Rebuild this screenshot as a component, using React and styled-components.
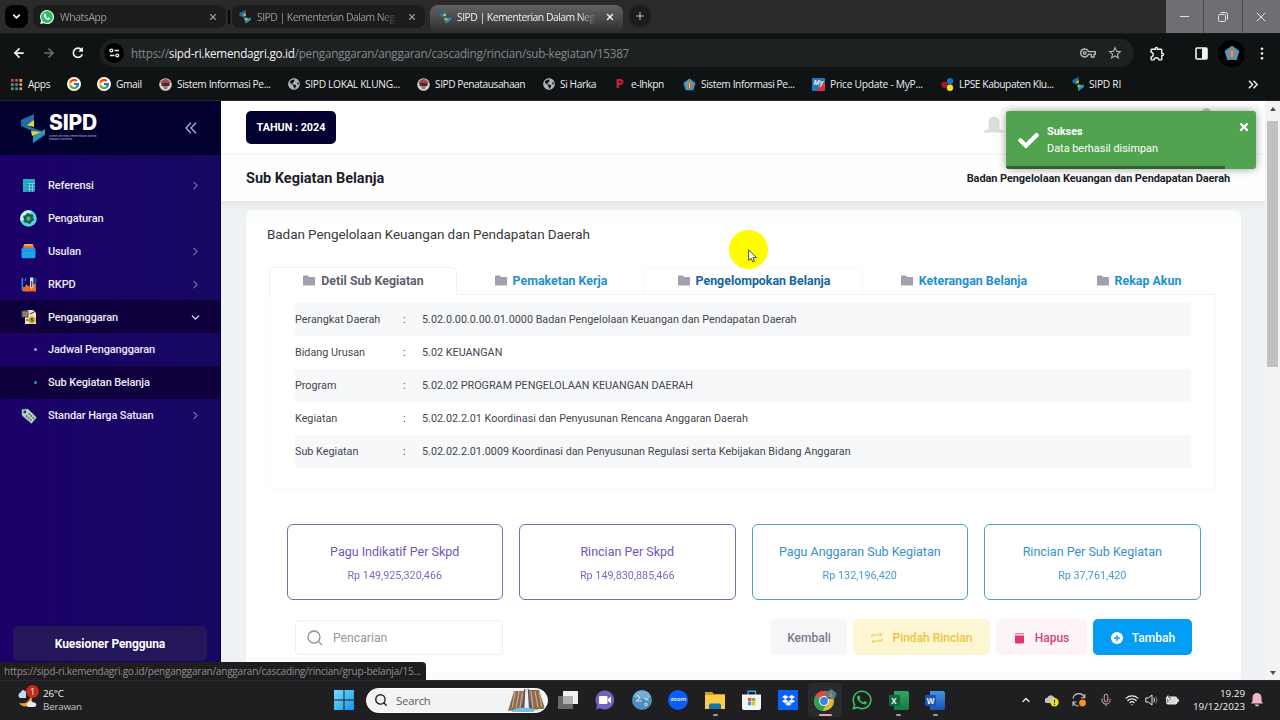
import styled, { createGlobalStyle, css } from 'styled-components';
import { FcGoogle } from 'react-icons/fc';
import { FaCheck, FaTimes, FaWhatsapp, FaDropbox, FaGlobeAmericas } from 'react-icons/fa';
import { MdOutlineVpnKey, MdStarBorder, MdOutlineExtension } from 'react-icons/md';
import { ArrowLeft, ArrowRight, ChevronDown, ChevronRight, ChevronUp, Plus, X, Search, Mic, Wifi } from 'lucide-react';

const GlobalStyle = createGlobalStyle`
  * {
    box-sizing: border-box;
  }

  body {
    margin: 0;
    overflow: hidden;
    background: #0f1214;
    font-family: 'Roboto', sans-serif;
  }

  svg {
    display: block;
    flex-shrink: 0;
  }
`;

const systemFont = css`
  font-family: 'Open Sans', 'Noto Sans', sans-serif;
`;

const Screen = styled.div`
  width: 1280px;
  height: 720px;
  display: flex;
  flex-direction: column;
  overflow: hidden;
`;

// ---------- Browser ----------
const TabStrip = styled.div`
  ${systemFont}
  height: 34px;
  flex-shrink: 0;
  display: flex;
  align-items: flex-start;
  padding: 5px 0 0 5px;
  background: #2a2a2a;
  border-bottom: 1px solid #17191a;
`;

const TabSearch = styled.div`
  width: 23px;
  height: 23px;
  margin-right: 5px;
  display: flex;
  align-items: center;
  justify-content: center;
  color: #fff;
  background: #000;
  border-radius: 8px;
`;

const BrowserTab = styled.div`
  width: 193px;
  height: ${({ $active }) => ($active ? 28 : 23)}px;
  padding: ${({ $active }) => ($active ? '0 8px 5px 9px' : '0 8px 0 7px')};
  display: flex;
  align-items: center;
  border-radius: 8px;
  font-size: 10.4px;
  color: ${({ $active }) => ($active ? '#f2f2f2' : '#9a9a9a')};
  background: ${({ $active }) =>
    $active ? 'linear-gradient(#626262, #4c4c4c 45%, #2a2a2a)' : '#1d1c1d'};

  span {
    flex: 1;
    margin: 0 7px 0 6px;
    white-space: nowrap;
    letter-spacing: ${({ $ls }) => $ls || -0.52}px;
    mask-image: linear-gradient(90deg, #000 86%, transparent 99%);
  }
`;

const TabDivider = styled.div`
  width: 2px;
  height: 14px;
  margin: 5px 2px 0;
  background: #050505;
`;

const NewTab = styled.div`
  width: 22px;
  height: 22px;
  margin-left: 6px;
  display: flex;
  align-items: center;
  justify-content: center;
  border-radius: 50%;
  color: #bdbdbd;
  background: #1d1c1d;
`;

const WindowControls = styled.div`
  display: flex;
  gap: 1px;
  margin: -5px 0 0 auto;
  background: #4b4a4e;
`;

const WindowControl = styled.div`
  width: 37.4px;
  height: 33px;
  display: flex;
  align-items: center;
  justify-content: center;
  color: #e4e4e6;
  background: #706e75;
`;

const Toolbar = styled.div`
  ${systemFont}
  height: 36px;
  flex-shrink: 0;
  display: flex;
  align-items: center;
  padding: 2px 0 0 10px;
  background: #101314;
  color: #f1f1f1;
`;

const NavButton = styled.div`
  width: 30px;
  padding-left: 2px;
  color: ${({ $muted }) => ($muted ? '#707273' : '#f4f4f4')};
`;

const AddressBar = styled.div`
  width: 1034px;
  height: 28px;
  padding: 0 11px 0 4px;
  display: flex;
  align-items: center;
  border-radius: 14px;
  background: #1e2122;
  color: #b9babb;
`;

const SiteInfo = styled.div`
  width: 20px;
  height: 20px;
  display: flex;
  align-items: center;
  justify-content: center;
  border-radius: 50%;
  background: #000;
`;

const Url = styled.div`
  flex: 1;
  margin-left: 7px;
  font-size: 11.7px;
  letter-spacing: -0.255px;
  color: #85888a;

  b {
    font-weight: 400;
    color: #f3f3f3;
  }
`;

const AddressIcons = styled.div`
  display: flex;
  align-items: center;
  gap: 11px;
`;

const Profile = styled.div`
  width: 27px;
  height: 27px;
  display: flex;
  align-items: center;
  justify-content: center;
  border-radius: 50%;
  background: #000;
`;

const Gap = styled.div`
  width: ${({ $w }) => $w}px;
`;

const BookmarkBar = styled.div`
  ${systemFont}
  height: 30px;
  flex-shrink: 0;
  padding: 0 0 2px 10px;
  display: grid;
  grid-template-columns: 57px 30px 62px 129px 129px 126px 72px 68px 129px 129px 131px 176px 20px;
  align-items: center;
  background: #101314;
  color: #ececec;
  font-size: 10.2px;
`;

const Bookmark = styled.div`
  display: flex;
  align-items: center;
  gap: 5px;
  white-space: nowrap;
  letter-spacing: ${({ $ls }) => $ls || -0.4}px;
`;

// ---------- Page ----------
const Page = styled.div`
  position: relative;
  height: 580px;
  flex-shrink: 0;
  display: flex;
  border-top: 1px solid #23242c;
  background: #eff2f5;
`;

const Sidebar = styled.aside`
  width: 221px;
  flex-shrink: 0;
  display: flex;
  flex-direction: column;
  border-right: 1px solid #06002c;
  background: linear-gradient(90deg, #1b0069, #160862);
`;

const Brand = styled.div`
  height: 54px;
  padding: 0 23px 0 20px;
  display: flex;
  align-items: center;
  background: #02002f;
  color: #fff;
`;

const BrandText = styled.div`
  flex: 1;
  margin: -3px 0 0 4px;
  font-family: 'Inter', sans-serif;

  strong {
    display: block;
    margin-bottom: 2px;
    font-size: 21px;
    line-height: 20px;
    font-weight: 800;
    letter-spacing: -0.15px;
  }

  small {
    display: block;
    width: 100px;
    font-size: 2.6px;
    line-height: 3px;
    color: #b9b9d0;
  }
`;

const Menu = styled.nav`
  padding-top: 13.5px;
  flex: 1;
`;

const MenuItem = styled.div`
  height: 32.9px;
  padding: 1px 18px 0 20px;
  display: flex;
  align-items: center;
  font-size: 11px;
  font-weight: 500;
  color: #eceaf8;
  background: ${({ $active }) => ($active ? '#0f003d' : 'transparent')};

  span {
    flex: 1;
    margin-left: 11px;
    letter-spacing: -0.12px;
  }
`;

const MenuIcon = styled.div`
  width: 17px;
  height: 17px;
  display: flex;
  align-items: center;
  justify-content: center;
`;

const Bullet = styled.i`
  width: 3px;
  height: 3px;
  margin-left: 14px;
  border-radius: 50%;
  background: ${({ $color }) => $color};
`;

const SurveyButton = styled.div`
  height: 35px;
  margin: 0 13px 19px;
  display: flex;
  align-items: center;
  justify-content: center;
  border-radius: 5px;
  background: #25165a;
  color: #fff;
  font-size: 12px;
  letter-spacing: -0.08px;
  font-weight: 700;
`;

const Main = styled.main`
  width: 1044px;
  display: flex;
  flex-direction: column;
  overflow: hidden;
`;

const TopBar = styled.header`
  height: 54px;
  flex-shrink: 0;
  padding: 0 261px 0 25px;
  display: flex;
  align-items: center;
  justify-content: space-between;
  background: #fff;
  border-bottom: 1px solid #f1f2f3;
`;

const YearBadge = styled.div`
  width: 90px;
  height: 33px;
  display: flex;
  align-items: center;
  justify-content: center;
  border-radius: 5px;
  background: #02002f;
  color: #fff;
  font-size: 10.8px;
  font-weight: 700;
`;

const SubHeader = styled.div`
  height: 46px;
  flex-shrink: 0;
  padding: 0 35px 0 25px;
  display: flex;
  align-items: center;
  justify-content: space-between;
  background: #fefefe;
  box-shadow: 0 3px 7px rgba(80, 100, 110, 0.12);
  color: #1c1e2c;

  h1 {
    margin: 1px 0 0;
    font-size: 14.5px;
    font-weight: 700;
  }

  strong {
    font-size: 11px;
    letter-spacing: -0.09px;
    font-weight: 700;
  }
`;

const Card = styled.section`
  width: 995px;
  height: 475px;
  flex-shrink: 0;
  margin: 9px 0 0 25px;
  padding-left: 21px;
  background: linear-gradient(#fcfdfd, #fff 24px, #fff 462px, #f9fbfd 463px);
  border-radius: 6px;
`;

const CardTitle = styled.h2`
  margin: 0 0 14px;
  padding-top: 14px;
  font-size: 13.5px;
  line-height: 20px;
  height: 43px;
  font-weight: 400;
  color: #3a3b42;
  letter-spacing: -0.07px;
`;

const Tabs = styled.div`
  height: 28px;
  width: 947px;
  margin-left: 2px;
  display: grid;
  grid-template-columns: 188px 187px 219px 201px 149px;
  border-bottom: 1px solid #f1f2f4;
`;

const Tab = styled.div`
  display: flex;
  align-items: center;
  justify-content: center;
  gap: 6px;
  height: 28px;
  padding: 0 0 2px 1px;
  font-size: 12.4px;
  font-weight: 700;
  color: ${({ $color }) => $color || '#1e90d2'};
  border: 1px solid ${({ $edge }) => $edge || 'transparent'};
  border-bottom: ${({ $open }) => ($open ? '1px solid #fff' : '0')};
  border-radius: 5px 5px 0 0;
`;

const Details = styled.div`
  width: 947px;
  height: 194px;
  margin-left: 2px;
  padding: 8px 24px 0 25px;
  border: 1px solid #fafafa;
  border-top: 0;
`;

const DetailRow = styled.div`
  height: 33px;
  display: grid;
  grid-template-columns: 108px 19px 1fr;
  align-items: center;
  font-size: 10.8px;
  color: #45464e;
  background: ${({ $striped }) => ($striped ? '#f6f8fa' : 'transparent')};
`;

const Budgets = styled.div`
  width: 914px;
  margin: 35px 0 0 19.5px;
  display: grid;
  grid-template-columns: repeat(4, 1fr);
  gap: 16px;
`;

const Budget = styled.div`
  height: 76px;
  padding-top: 3px;
  display: flex;
  flex-direction: column;
  align-items: center;
  justify-content: center;
  gap: 8px;
  border: 1px solid ${({ $purple }) => ($purple ? '#7a6cb4' : '#4aa3c4')};
  border-radius: 6px;
  color: ${({ $purple }) => ($purple ? '#7256b8' : '#3490c8')};
  font-size: 12.5px;
  line-height: 16px;

  span {
    font-size: 10.8px;
    opacity: 0.9;
  }
`;

const Actions = styled.div`
  width: 897px;
  margin: 19px 0 0 28px;
  display: flex;
  align-items: center;
  gap: 6px;
`;

const SearchBox = styled.div`
  width: 208px;
  height: 35px;
  margin-right: auto;
  padding: 1px 0 0 11px;
  display: flex;
  align-items: center;
  gap: 10px;
  border: 1px solid #efeff1;
  border-radius: 4px;
  color: #96979f;
  font-size: 12.2px;
`;

const ActionButton = styled.div`
  width: ${({ $w }) => $w}px;
  height: 36px;
  padding: 1px 0 0 1px;
  display: flex;
  align-items: center;
  justify-content: center;
  gap: ${({ $gap }) => $gap || 9}px;
  border-radius: 5px;
  background: ${({ $bg }) => $bg};
  color: ${({ $color }) => $color};
  font-size: 12px;
  font-weight: 500;
`;

const Scrollbar = styled.div`
  width: 15px;
  padding: 6px 2px 5px 2px;
  display: flex;
  flex-direction: column;
  align-items: center;
  background: #f3f3f3;
`;

const Thumb = styled.div`
  width: 11px;
  height: 246px;
  margin: 10px 0 auto;
  background: #c1c1c1;
`;

const Arrow = styled.i`
  border: 3px solid transparent;
  border-top-width: ${({ $up }) => ($up ? 0 : 4)}px;
  border-bottom-width: ${({ $up }) => ($up ? 4 : 0)}px;
  border-${({ $up }) => ($up ? 'bottom' : 'top')}-color: #505050;
`;

const Toast = styled.div`
  position: absolute;
  left: 1006px;
  top: 10px;
  width: 250px;
  height: 58px;
  padding: 0 6px 0 12px;
  display: flex;
  border-radius: 3px;
  overflow: hidden;
  background: #51a34f;
  color: #fff;
  box-shadow: 0 0 8px rgba(0, 0, 0, 0.4);

  &::after {
    content: '';
    position: absolute;
    left: 0;
    bottom: 0;
    width: 219px;
    height: 3px;
    background: #30622f;
  }
`;

// Top edge of the user avatar that stays visible above the toast
const AvatarEdge = styled.div`
  position: absolute;
  left: 1202px;
  top: 7px;
  width: 9px;
  height: 9px;
  border-radius: 50%;
  background: #c3c8c3;
`;

const ToastCheck = styled(FaCheck)`
  margin-top: 19px;
`;

const ToastClose = styled(FaTimes)`
  margin-top: 10px;
`;

const ToastText = styled.div`
  flex: 1;
  margin: 13px 0 0 8px;
  font-size: 10.9px;
  line-height: 17px;

  strong {
    display: block;
    line-height: 16px;
  }
`;

const ClickSpot = styled.div`
  position: absolute;
  left: 729px;
  top: 129px;
  width: 39px;
  height: 39px;
  padding: 19px 0 0 19px;
  border-radius: 50%;
  background: #fffb00;
`;

const StatusBubble = styled.div`
  ${systemFont}
  position: absolute;
  left: 0;
  bottom: 0;
  width: 426px;
  height: 18px;
  padding: 1px 0 0 4px;
  border-radius: 0 4px 0 0;
  background: #1f1d1f;
  color: #8f8f90;
  font-size: 10px;
  line-height: 16px;
  letter-spacing: -0.21px;
  white-space: nowrap;
`;

// ---------- Taskbar ----------
const Taskbar = styled.footer`
  ${systemFont}
  height: 40px;
  flex-shrink: 0;
  display: flex;
  align-items: center;
  padding: 0 17px 1px;
  background: #1f1e21;
  border-top: 1px solid #2b2a2e;
  color: #f2f2f2;
  font-size: 9.8px;
  line-height: 13px;
`;

const Weather = styled.div`
  width: 317px;
  display: flex;
  gap: 6px;
`;

const WeatherText = styled.div`
  letter-spacing: -0.2px;

  span {
    display: block;
    color: #c4c4c4;
  }
`;

const TaskSearch = styled.div`
  width: 182px;
  height: 25px;
  margin: 0 2px 0 12px;
  padding-left: 7px;
  display: flex;
  align-items: center;
  gap: 8px;
  border: 1px solid #fff;
  border-radius: 13px;
  overflow: hidden;
  background: #f3f3f3;
  color: #5e5e5e;
  font-size: 11.3px;
  letter-spacing: -0.2px;

  svg:last-child {
    margin: 0 2px 0 auto;
  }
`;

const TaskIcon = styled.div`
  position: relative;
  width: 36.7px;
  height: 36px;
  display: flex;
  align-items: center;
  justify-content: center;

  &::after {
    content: '';
    position: absolute;
    bottom: 2px;
    width: ${({ $bar }) => $bar || 0}px;
    height: 2px;
    border-radius: 2px;
    background: ${({ $barColor }) => $barColor || '#9b9b9d'};
  }
`;

const TaskHighlight = styled.div`
  width: 34px;
  height: 34px;
  display: flex;
  align-items: center;
  justify-content: center;
  border-radius: 4px;
  background: #2a2a2d;
`;

const ZoomLogo = styled.div`
  width: 20px;
  height: 20px;
  border-radius: 50%;
  background: #0b5cff;
  color: #fff;
  text-align: center;
  font-size: 6px;
  line-height: 18px;
  font-weight: 600;
`;

const OfficeLogo = styled.div`
  width: 20px;
  height: 19px;
  display: flex;
  align-items: center;
  border-radius: 2px;
  background: linear-gradient(90deg, #1f1e21 5px, transparent 5px), linear-gradient(${({ $shades }) => $shades});

  b {
    width: 11px;
    height: 11px;
    text-align: center;
    font-size: 8px;
    line-height: 11px;
    border-radius: 1px;
    background: ${({ $tag }) => $tag};
  }
`;

const Tray = styled.div`
  margin-left: auto;
  display: grid;
  grid-template-columns: 25px 27px 27px 26px 20px 20px 22px 58px 18px;
  align-items: center;
`;

const Clock = styled.div`
  justify-self: end;
  text-align: right;
`;

const TrayEnd = styled.div`
  justify-self: end;
`;

// ---------- Drawings ----------
const SipdMark = ({ size = 12 }) => (
  <svg width={size} height={size * 1.16} viewBox="0 0 25 29">
    <path d="M1 6 L14 0 V7 L8 10 L12 13 L7 12 L1 9Z" fill="#1f6fae" />
    <path d="M1 9 L18 16 L25 18 V21 L13 29 V22 L17 19 L1 12Z" fill="#167a9c" />
    <path d="M13 22 L25 15 V20 L13 29Z" fill="#2a94b8" />
    <path d="M7 11 L14 6 V13Z" fill="#f4cf31" />
    <path d="M11 17 L21 18 L12 22Z" fill="#f4cf31" />
  </svg>
);

const Garuda = () => (
  <svg width="13" height="13" viewBox="0 0 13 13">
    <circle cx="6.500" cy="6.500" r="6.300" fill="#d8d0ce" />
    <path d="M1 5 Q6.500 -3 12 5Z" fill="#a8444a" />
    <rect x="2.500" y="5" width="8" height="3" fill="#34333f" />
    <path d="M4 8 h5 l-1 3 h-3z" fill="#b96f56" />
  </svg>
);

const Pentagon = ({ size = 13 }) => (
  <svg width={size} height={size} viewBox="0 0 16 16">
    <path d="M8 .5 L15.500 6 L12.800 15 H3.200 L.5 6Z" fill="#3f94be" />
    <path d="M8 2.500 L13 6.500 L11.500 13 H4.500 L3 6.500Z" fill="#7193a0" />
    <path d="M8 3 L10 9 L9.500 13 H6.500 L6 9Z" fill="#e0542f" />
    <rect x="7.400" y="6" width="1.200" height="6" fill="#f6d264" />
  </svg>
);

const WhatsAppLogo = () => (
  <svg width="14" height="14" viewBox="0 0 14 14">
    <path d="M7 0a7 7 0 1 1-3.200 13.200L.2 14l.9-3.400A7 7 0 0 1 7 0Z" fill="#eefbf1" />
    <circle cx="7" cy="7" r="5.900" fill="#25c15a" />
    <path d="M4.600 3.600l1.200.2.500 1.500-.6.700q.8 1.500 2.200 2.100l.8-.8 1.500.8q0 1.700-1.800 1.900Q4.500 9.500 3.800 5.500q0-1.300.8-1.900Z" fill="#fff" />
  </svg>
);

const AppsGrid = () => (
  <svg width="13" height="13" viewBox="0 0 13 13">
    {['#d8453b', '#d8453b', '#e0b33a', '#3fa860', '#4a83d8', '#e0b33a', '#3fa860', '#4a83d8', '#d9a636'].map((fill, i) => (
      <rect key={i} x={1 + (i % 3) * 4.2} y={1 + Math.floor(i / 3) * 4.2} width="2.700" height="2.700" fill={fill} />
    ))}
  </svg>
);

const GoogleBadge = styled.div`
  width: 14px;
  height: 14px;
  display: flex;
  align-items: center;
  justify-content: center;
  border-radius: 50%;
  background: #fff;
`;

const MyLogo = styled.div`
  width: 13px;
  height: 13px;
  background: linear-gradient(135deg, #2377bd 62%, #d83340 63%);
  font-size: 7px;
  line-height: 9px;
  font-weight: 700;
  font-style: italic;
  text-align: center;
  letter-spacing: 0;
`;

const PLogo = styled.div`
  width: 9px;
  margin-right: 2px;
  text-align: center;
  color: #d21f30;
  font-family: 'Roboto', sans-serif;
  font-weight: 900;
  font-size: 12px;
  line-height: 13px;
`;

const Dots = () => (
  <svg width="13" height="13" viewBox="0 0 13 13">
    <circle cx="3.500" cy="6.800" r="3.200" fill="#a51a1a" />
    <circle cx="9" cy="3.200" r="3.200" fill="#1c6fb5" />
    <circle cx="9" cy="9.700" r="3.200" fill="#f2e22c" />
  </svg>
);

const Reload = () => (
  <svg width="12" height="12" viewBox="0 0 12 12" fill="none" stroke="currentColor" strokeWidth="1.700">
    <path d="M10.300 7.200A4.600 4.600 0 1 1 9.600 3" />
    <path d="M11 0v4.800H6.200Z" fill="currentColor" stroke="none" />
  </svg>
);

const Tune = () => (
  <svg width="11" height="10" viewBox="0 0 11 10" fill="none" stroke="#f1f1f1" strokeWidth="1.300">
    <circle cx="2.300" cy="2.500" r="1.400" />
    <path d="M5.500 2.500H10M1 7.500h4.500" />
    <circle cx="8.300" cy="7.500" r="1.400" />
  </svg>
);

const SidePanel = () => (
  <svg width="13" height="13" viewBox="0 0 13 13">
    <rect x="1" y="1" width="11" height="11" rx="1" fill="none" stroke="#f3f3f3" strokeWidth="1.600" />
    <rect x="7" y="1" width="5" height="11" fill="#f3f3f3" />
  </svg>
);

const Kebab = () => (
  <svg width="4" height="13" viewBox="0 0 4 13" fill="#f3f3f3">
    <circle cx="2" cy="1.800" r="1.300" />
    <circle cx="2" cy="6.500" r="1.300" />
    <circle cx="2" cy="11.200" r="1.300" />
  </svg>
);

const DoubleChevron = ({ size = 12, right, color = '#aeb1d8' }) => (
  <svg width={size} height={size} viewBox="0 0 12 12" fill="none" stroke={color} strokeWidth={right ? 1.6 : 1.3}>
    {right ? <path d="M1 2l4 4-4 4M6 2l4 4-4 4" /> : <path d="M6 .8L1 6l5 5.200M11 .8L6 6l5 5.200" />}
  </svg>
);

const FolderIcon = () => (
  <svg width="12" height="11" viewBox="0 0 12 11" fill="#a0a1ad">
    <path d="M.5 .5h4.300L6 2h5.500q.5 0 .5.500v7.500q0 .5-.5.500H.5q-.5 0-.5-.5V1Q0 .5.500 .5Z" />
  </svg>
);

const TableIcon = () => (
  <svg width="12" height="13" viewBox="0 0 12 13">
    <rect width="12" height="13" rx="1" fill="#168fae" />
    <path d="M0 0h12v3.500H3.500V13H0Z" fill="#1bb2c3" />
    <path d="M4 4.500h8M4 7.300h8M4 10.200h8M6.500 4v9M9.400 4v9" stroke="#93d7ec" strokeWidth=".8" />
  </svg>
);

const GearIcon = () => (
  <svg width="17" height="17" viewBox="0 0 17 17">
    <circle cx="8.500" cy="8.500" r="8.300" fill="#55d4de" />
    <path d="M8.500 .2A8.300 8.300 0 0 0 .8 11.500L12 1Z" fill="#c3f5f2" />
    <circle cx="8.500" cy="8.500" r="4.400" fill="#1e5b51" stroke="#1e5b51" strokeWidth="2.200" strokeDasharray="2.300 2.300" />
    <circle cx="8.500" cy="8.500" r="4.500" fill="#1e5b51" />
    <circle cx="8.500" cy="8.500" r="2.200" fill="#4eb17e" />
  </svg>
);

const BoxIcon = () => (
  <svg width="15" height="15" viewBox="0 0 15 15">
    <path d="M3.500 0h8l1 2h-10Z" fill="#f5b455" />
    <path d="M2.500 1.800h10l1 3h-12Z" fill="#e2732f" />
    <rect x=".5" y="4.300" width="14" height="10" rx="1.200" fill="#1ba0f2" />
    <path d="M1 7.800L14 6" stroke="#1583dd" strokeWidth=".7" />
  </svg>
);

const PlanIcon = () => (
  <svg width="16" height="15" viewBox="0 0 16 15">
    <path d="M1.500 14V10L4 10l1-3 3 2.500L10 7h5v7.500h-13Z" fill="#ef6b22" />
    <path d="M1.300 1v12.500" stroke="#1f83d0" strokeWidth="1.800" />
    <path d="M4.500 1v3M14.500 1v6" stroke="#2a5f9e" strokeWidth="1.600" />
    <path d="M9 .5h3.400v9L10.700 12.500 9 9.500Z" fill="#cfe5f7" />
    <path d="M10.700 4v6" stroke="#223b73" strokeWidth="1.200" />
  </svg>
);

const BudgetIcon = () => (
  <svg width="16" height="16" viewBox="0 0 16 16">
    <path d="M6 1h6l3 3v11H4V8h2Z" fill="#e9e5d2" />
    <path d="M.5 1.500h7v7h-7Z" fill="#4c4940" />
    <path d="M1 4h6M1 6.300h6M3 2v6M5.300 2v6" stroke="#c9c09a" strokeWidth=".6" />
    <path d="M9 5l4-2M5 11h3" stroke="#2f2f2f" />
    <circle cx="11" cy="11" r="3.500" fill="#d3a62b" />
    <path d="M12 9.500q-2.500-.5-2 .8l1.800.7q.6 1.600-2 1" fill="none" stroke="#3b2f0c" strokeWidth=".9" />
  </svg>
);

const TagIcon = () => (
  <svg width="16" height="16" viewBox="0 0 16 16">
    <path d="M1 1.500l6-.5 8.500 8.500-5 6L1 7.500Z" fill="#c2cfc8" stroke="#6d9a84" strokeWidth=".6" />
    <circle cx="3.800" cy="4" r="1.400" fill="#1a3b4c" />
    <path d="M5 7.500l5.500 5M7.500 5.500l5.500 5" stroke="#2f6c58" strokeWidth="1.400" strokeDasharray="1.800 1" />
  </svg>
);

const Bell = () => (
  <svg width="20" height="23" viewBox="0 0 20 23" fill="#dcdcdc">
    <path d="M4.500 13V6.500a5.500 6 0 0 1 11 0V13l4.500 2v1.500H0V15Z" />
    <path d="M8 19.500h4" stroke="#f0f0f0" strokeWidth="1" />
  </svg>
);

const SwapIcon = () => (
  <svg width="12" height="10" viewBox="0 0 12 10" fill="none" stroke="currentColor" strokeWidth="1.100">
    <path d="M.8 4.200V3q0-1 1-1H11M9.200 .4L11 2M11.200 5.800V7q0 1-1 1H1M2.800 9.600L1 8" />
  </svg>
);

const TrashIcon = () => (
  <svg width="9" height="12" viewBox="0 0 9 12" fill="#e2356b">
    <rect y="1" width="9" height="1.400" opacity=".6" />
    <path d="M0 3.500h9V10a1.500 1.500 0 0 1-1.500 1.500h-6A1.500 1.500 0 0 1 0 10Z" />
  </svg>
);

const PlusIcon = () => (
  <svg width="12" height="12" viewBox="0 0 12 12">
    <circle cx="6" cy="6" r="6" fill="#fff" />
    <path d="M6 3v6M3 6h6" stroke="#0a9cf5" strokeWidth="1.400" />
  </svg>
);

const SearchIcon = () => (
  <svg width="16" height="16" viewBox="0 0 16 16" fill="none" stroke="#8f9096" strokeWidth="1.300">
    <circle cx="7" cy="7" r="6" />
    <path d="M11.500 11.500l3.500 3.500" />
  </svg>
);

const Cursor = () => (
  <svg width="10" height="14" viewBox="0 0 10 14">
    <path d="M.6 .8v10.600l2.500-2.200 1.700 3.800 1.700-.8L4.900 8.600h3.500Z" fill="#fff" stroke="#222" strokeWidth=".8" />
  </svg>
);

const WeatherIcon = () => (
  <svg width="20" height="24" viewBox="0 0 20 24">
    <path d="M14 9A6.500 6.500 0 1 1 2 16Q11 18 14 9Z" fill="#f39b2c" />
    <path d="M3 11a3 3 0 0 1 .5-5.500Q6 1 9 5v6Z" fill="#c5d9f6" />
    <path d="M11 20a2.500 2.500 0 0 1 0-4.500q3-3 5.500 0a2.300 2.300 0 0 1 1 4.500Z" fill="#dce9fb" />
  </svg>
);

const WeatherBadge = styled.div`
  position: absolute;
  left: 9px;
  top: -2px;
  width: 13px;
  height: 13px;
  border-radius: 50%;
  background: #c52b1c;
  text-align: center;
  font-size: 9px;
  line-height: 13px;
`;

const WeatherGlyph = styled.div`
  position: relative;
`;

const WindowsLogo = () => (
  <svg width="20" height="20" viewBox="0 0 20 20">
    <defs>
      <linearGradient id="win" x1="0" y1="0" x2="1" y2="1">
        <stop stopColor="#79dcfb" />
        <stop offset="1" stopColor="#0f95e8" />
      </linearGradient>
    </defs>
    <path d="M0 0h9.500v9.500H0ZM10.500 0H20v9.500h-9.500ZM0 10.500h9.500V20H0ZM10.500 10.500H20V20h-9.500Z" fill="url(#win)" />
  </svg>
);

const Canyon = () => (
  <svg width="37" height="23" viewBox="0 0 37 23">
    <path d="M0 22L6 2h11l-2 17ZM37 20L31 1H20l2 19Z" fill="#8b6a56" />
    <path d="M7 3L4 20M11 2L8 20M14.500 3L12 19M23 2l2 17M27 2l3 17M31 3l3 15" stroke="#cfa98d" strokeWidth="1.200" />
    <path d="M16 0h5v6l3 13H13l3-11Z" fill="#5d5563" />
    <path d="M17.500 0h2.200l1.200 19h-4.500Z" fill="#eef3fb" />
    <path d="M3 21q15-5 25 0l-3 2H4Z" fill="#79c0e6" />
    <path d="M0 22l6-5 2 3ZM37 19l-6-3-4 5Z" fill="#7c7f46" />
  </svg>
);

const TaskView = () => (
  <svg width="20" height="19" viewBox="0 0 20 19">
    <rect x="5" width="15" height="13" fill="#efefef" />
    <rect y="5" width="15" height="13" fill="#777" opacity=".85" />
    <rect x="5" y="5" width="10" height="8" fill="#b0b0b0" />
  </svg>
);

const ChatLogo = () => (
  <svg width="20" height="20" viewBox="0 0 20 20">
    <path d="M10 .5A9.500 9.500 0 1 1 5 18.300L1 19.500l1-4.500A9.500 9.500 0 0 1 10 .5Z" fill="#6e62c0" />
    <rect x="4" y="6" width="8.500" height="8" rx="1" fill="#fff" />
    <path d="M13 9l3-2.500v7L13 11Z" fill="#fff" />
  </svg>
);

const StatLogo = () => (
  <svg width="20" height="20" viewBox="0 0 20 20" fill="none" stroke="#dcecf6">
    <circle cx="10" cy="10" r="10" fill="#4b8fba" stroke="none" />
    <path d="M1 7A9.500 9.500 0 0 1 19 7L10 9Z" fill="#76add0" stroke="none" />
    <path d="M5 5l3 3-4 3h6M16.500 7.500q-2 4-3.500 1.500t3.500 1.500" />
    <circle cx="14" cy="14.500" r="1.300" />
  </svg>
);

const FolderLogo = () => (
  <svg width="20" height="19" viewBox="0 0 20 19">
    <path d="M0 1h7l2 2h11v14H0Z" fill="#d99a19" />
    <path d="M0 4h20v14H0Z" fill="#f9cc45" />
    <path d="M4 18v-4q0-1.500 1.500-1.500h9Q16 12.500 16 14v4Z" fill="#1673a8" />
  </svg>
);

const StoreLogo = () => (
  <svg width="19" height="20" viewBox="0 0 19 20">
    <path d="M6 5V1.200h7.500V5" fill="none" stroke="#37a8dc" strokeWidth="1.400" />
    <path d="M0 4.500h19V18a2 2 0 0 1-2 2H2a2 2 0 0 1-2-2Z" fill="#f4f4f4" />
    <rect x="6" y="8" width="3.300" height="3.300" fill="#e0492f" />
    <rect x="10" y="8" width="3.300" height="3.300" fill="#7db52f" />
    <rect x="6" y="12" width="3.300" height="3.300" fill="#2b9de0" />
    <rect x="10" y="12" width="3.300" height="3.300" fill="#f4b71e" />
  </svg>
);

const DropboxTile = styled.div`
  width: 20px;
  height: 20px;
  display: flex;
  align-items: center;
  justify-content: center;
  background: #0a61fd;
`;

const ChromeLogo = () => (
  <svg width="24" height="24" viewBox="0 0 24 24">
    <circle cx="11" cy="13" r="10" fill="#e3b92e" />
    <path d="M11 13L2.300 8A10 10 0 0 1 20 8.500Z" fill="#dd4b3e" />
    <path d="M11 13L2.300 8A10 10 0 0 0 9.500 23l4-7Z" fill="#2da14f" />
    <circle cx="11" cy="13" r="5" fill="#fff" />
    <circle cx="11" cy="13" r="3.900" fill="#3f7fe8" />
    <path d="M18 1l5.500 4-2 6h-7l-2-6Z" fill="#4d7f94" />
    <path d="M18 3l1.500 6h-3Z" fill="#e8763f" />
  </svg>
);

const CloudIcon = () => (
  <svg width="14" height="13" viewBox="0 0 14 13">
    <path d="M2 9a2.500 2.500 0 0 1 0-5Q5-1 9 3l3 3-5 3Z" fill="#c3c3c3" />
    <circle cx="9.500" cy="8.300" r="4.200" fill="#f1de25" />
    <path d="M9.500 5.800v3M9.500 9.700v1.200" stroke="#222" strokeWidth="1.100" />
  </svg>
);

const SyncIcon = () => (
  <svg width="14" height="14" viewBox="0 0 14 14" fill="none" stroke="#c9c9c9" strokeWidth="1.100">
    <path d="M1 5.500A6 6 0 0 1 12.500 4.500M12.800 1v3.800H9M1 13V9h3.500M1.500 9.500Q3 13 6.500 13" />
    <circle cx="10.500" cy="10" r="3.400" fill="#f3921e" stroke="none" />
  </svg>
);

const SpeakerIcon = () => (
  <svg width="14" height="12" viewBox="0 0 14 12" fill="none" stroke="#ececec">
    <path d="M.8 4v4h2.500L7 11V1L3.300 4ZM8.800 3.800q1.500 2.200 0 4.400" />
    <path d="M10.600 2.300q2.600 3.700 0 7.400" stroke="#777" />
  </svg>
);

const BatteryIcon = () => (
  <svg width="14" height="12" viewBox="0 0 14 12">
    <rect x="1.500" y="3" width="10.500" height="7" rx="1.500" fill="#d9d9d9" stroke="#f3f3f3" />
    <path d="M13 5v3" stroke="#f3f3f3" strokeWidth="1.500" />
    <path d="M3.500 0L0 5h2.500L2 8.500 5.800 3.700H3.500Z" fill="#fff" stroke="#1f1e21" strokeWidth=".5" />
  </svg>
);

const TrayBell = () => (
  <svg width="12" height="14" viewBox="0 0 12 14" fill="#efb7c4">
    <path d="M6 0a4.500 4.500 0 0 1 4.500 4.500V8L12 10.500H0L1.500 8V4.500A4.500 4.500 0 0 1 6 0ZM4 11.500h4a2 2 0 0 1-4 0Z" />
  </svg>
);

const bookmarks = [
  { icon: <AppsGrid />, text: 'Apps' },
  { icon: <GoogleBadge><FcGoogle size={12} /></GoogleBadge> },
  { icon: <GoogleBadge><FcGoogle size={12} /></GoogleBadge>, text: 'Gmail' },
  { icon: <Garuda />, text: 'Sistem Informasi Pe...' },
  { icon: <FaGlobeAmericas size={12} color="#b0b3b6" />, text: 'SIPD LOKAL KLUNG...', ls: -0.3 },
  { icon: <Garuda />, text: 'SIPD Penatausahaan', ls: -0.45 },
  { icon: <FaGlobeAmericas size={12} color="#b0b3b6" />, text: 'Si Harka' },
  { icon: <PLogo>P</PLogo>, text: 'e-lhkpn' },
  { icon: <Pentagon />, text: 'Sistem Informasi Pe...' },
  { icon: <MyLogo>My</MyLogo>, text: 'Price Update - MyP...', ls: -0.25 },
  { icon: <Dots />, text: 'LPSE Kabupaten Klu...' },
  { icon: <SipdMark size={12} />, text: 'SIPD RI', ls: -0.25 },
];

const menu = [
  { icon: <TableIcon />, text: 'Referensi', arrow: true },
  { icon: <GearIcon />, text: 'Pengaturan' },
  { icon: <BoxIcon />, text: 'Usulan', arrow: true },
  { icon: <PlanIcon />, text: 'RKPD', arrow: true },
  { icon: <BudgetIcon />, text: 'Penganggaran', open: true, active: true },
  { bullet: '#a9a3d6', text: 'Jadwal Penganggaran' },
  { bullet: '#2b8fd8', text: 'Sub Kegiatan Belanja', active: true },
  { icon: <TagIcon />, text: 'Standar Harga Satuan', arrow: true },
];

const tabs = [
  { text: 'Detil Sub Kegiatan', color: '#5f5f6d', edge: '#eff0f2', open: true },
  { text: 'Pemaketan Kerja' },
  { text: 'Pengelompokan Belanja', color: '#17659f', edge: '#f7f7f8' },
  { text: 'Keterangan Belanja' },
  { text: 'Rekap Akun' },
];

const details = [
  ['Perangkat Daerah', '5.02.0.00.0.00.01.0000 Badan Pengelolaan Keuangan dan Pendapatan Daerah'],
  ['Bidang Urusan', '5.02 KEUANGAN'],
  ['Program', '5.02.02 PROGRAM PENGELOLAAN KEUANGAN DAERAH'],
  ['Kegiatan', '5.02.02.2.01 Koordinasi dan Penyusunan Rencana Anggaran Daerah'],
  ['Sub Kegiatan', '5.02.02.2.01.0009 Koordinasi dan Penyusunan Regulasi serta Kebijakan Bidang Anggaran'],
];

const budgets = [
  { title: 'Pagu Indikatif Per Skpd', value: 'Rp 149,925,320,466', purple: true },
  { title: 'Rincian Per Skpd', value: 'Rp 149,830,885,466', purple: true },
  { title: 'Pagu Anggaran Sub Kegiatan', value: 'Rp 132,196,420' },
  { title: 'Rincian Per Sub Kegiatan', value: 'Rp 37,761,420' },
];

const Browser = () => (
  <>
    <TabStrip>
      <TabSearch><ChevronDown size={11} strokeWidth={3.5} /></TabSearch>
      <BrowserTab $ls={-0.4}>
        <WhatsAppLogo />
        <span>WhatsApp</span>
        <X size={10} strokeWidth={2.6} />
      </BrowserTab>
      <TabDivider />
      <BrowserTab>
        <SipdMark size={12} />
        <span>SIPD | Kementerian Dalam Neg</span>
        <X size={10} strokeWidth={2.6} />
      </BrowserTab>
      <Gap $w={5} />
      <BrowserTab $active>
        <SipdMark size={12} />
        <span>SIPD | Kementerian Dalam Neg</span>
        <X size={10} strokeWidth={3.4} />
      </BrowserTab>
      <NewTab><Plus size={12} strokeWidth={2} /></NewTab>
      <WindowControls>
        <WindowControl><svg width="9" height="9" stroke="currentColor"><path d="M0 4.500h9" /></svg></WindowControl>
        <WindowControl>
          <svg width="10" height="10" fill="none" stroke="currentColor">
            <rect x=".5" y="2.500" width="7" height="7" rx="1" />
            <path d="M2.500 .5h5a2 2 0 0 1 2 2v5" />
          </svg>
        </WindowControl>
        <WindowControl><svg width="10" height="10" stroke="currentColor"><path d="M.7 .7l8.600 8.600M9.300 .7L.7 9.300" /></svg></WindowControl>
      </WindowControls>
    </TabStrip>
    <Toolbar>
      <NavButton><ArrowLeft size={14} strokeWidth={3} /></NavButton>
      <NavButton $muted><ArrowRight size={14} strokeWidth={2.6} /></NavButton>
      <NavButton><Reload /></NavButton>
      <AddressBar>
        <SiteInfo><Tune /></SiteInfo>
        <Url>https://<b>sipd-ri.kemendagri.go.id</b>/penganggaran/anggaran/cascading/rincian/sub-kegiatan/15387</Url>
        <AddressIcons>
          <MdOutlineVpnKey size={16} />
          <MdStarBorder size={16} />
        </AddressIcons>
      </AddressBar>
      <Gap $w={15} />
      <MdOutlineExtension size={17} />
      <Gap $w={29} />
      <SidePanel />
      <Gap $w={10} />
      <Profile><Pentagon size={16} /></Profile>
      <Gap $w={15} />
      <Kebab />
    </Toolbar>
    <BookmarkBar>
      {bookmarks.map(({ icon, text, ls }, i) => (
        <Bookmark key={i} $ls={ls}>{icon}{text}</Bookmark>
      ))}
      <DoubleChevron size={11} right color="#f1f1f1" />
    </BookmarkBar>
  </>
);

const SideMenu = () => (
  <Sidebar>
    <Brand>
      <SipdMark size={25} />
      <BrandText>
        <strong>SIPD</strong>
        <small>Sistem Informasi Pemerintahan Daerah</small>
        <small>Republik Indonesia</small>
      </BrandText>
      <DoubleChevron />
    </Brand>
    <Menu>
      {menu.map(({ icon, bullet, text, arrow, open, active }) => (
        <MenuItem key={text} $active={active}>
          <MenuIcon>{bullet ? <Bullet $color={bullet} /> : icon}</MenuIcon>
          <span>{text}</span>
          {arrow && <ChevronRight size={13} strokeWidth={1.8} color="#b3b0da" />}
          {open && <ChevronDown size={13} strokeWidth={2.2} />}
        </MenuItem>
      ))}
    </Menu>
    <SurveyButton>Kuesioner Pengguna</SurveyButton>
  </Sidebar>
);

const Content = () => (
  <Main>
    <TopBar>
      <YearBadge>TAHUN : 2024</YearBadge>
      <Bell />
    </TopBar>
    <SubHeader>
      <h1>Sub Kegiatan Belanja</h1>
      <strong>Badan Pengelolaan Keuangan dan Pendapatan Daerah</strong>
    </SubHeader>
    <Card>
      <CardTitle>Badan Pengelolaan Keuangan dan Pendapatan Daerah</CardTitle>
      <Tabs>
        {tabs.map(({ text, color, edge, open }) => (
          <Tab key={text} $color={color} $edge={edge} $open={open}>
            <FolderIcon />
            {text}
          </Tab>
        ))}
      </Tabs>
      <Details>
        {details.map(([label, value], i) => (
          <DetailRow key={label} $striped={i % 2 === 0}>
            <span>{label}</span>
            <span>:</span>
            <span>{value}</span>
          </DetailRow>
        ))}
      </Details>
      <Budgets>
        {budgets.map(({ title, value, purple }) => (
          <Budget key={title} $purple={purple}>
            {title}
            <span>{value}</span>
          </Budget>
        ))}
      </Budgets>
      <Actions>
        <SearchBox>
          <SearchIcon />
          Pencarian
        </SearchBox>
        <ActionButton $w={77} $bg="#f7f7f9" $color="#787a8b">Kembali</ActionButton>
        <ActionButton $w={137} $bg="#fdf6d3" $color="#edc53f"><SwapIcon />Pindah Rincian</ActionButton>
        <ActionButton $w={91} $gap={11} $bg="#fdf4f7" $color="#d2447a"><TrashIcon />Hapus</ActionButton>
        <ActionButton $w={99} $bg="#039df6" $color="#fff"><PlusIcon />Tambah</ActionButton>
      </Actions>
    </Card>
  </Main>
);

const App = () => (
  <Screen>
    <GlobalStyle />
    <Browser />
    <Page>
      <SideMenu />
      <Content />
      <Scrollbar>
        <Arrow $up />
        <Thumb />
        <Arrow />
      </Scrollbar>
      <ClickSpot><Cursor /></ClickSpot>
      <AvatarEdge />
      <Toast>
        <ToastCheck size={21} />
        <ToastText>
          <strong>Sukses</strong>
          Data berhasil disimpan
        </ToastText>
        <ToastClose size={12} />
      </Toast>
      <StatusBubble>https://sipd-ri.kemendagri.go.id/penganggaran/anggaran/cascading/rincian/grup-belanja/15...</StatusBubble>
    </Page>
    <Taskbar>
      <Weather>
        <WeatherGlyph><WeatherIcon /><WeatherBadge>1</WeatherBadge></WeatherGlyph>
        <WeatherText>26°C<span>Berawan</span></WeatherText>
      </Weather>
      <WindowsLogo />
      <TaskSearch>
        <Search size={14} strokeWidth={2.4} color="#222" />
        Search
        <Canyon />
      </TaskSearch>
      <TaskIcon><TaskView /></TaskIcon>
      <TaskIcon><ChatLogo /></TaskIcon>
      <TaskIcon><StatLogo /></TaskIcon>
      <TaskIcon><ZoomLogo>zoom</ZoomLogo></TaskIcon>
      <TaskIcon $bar={5}><FolderLogo /></TaskIcon>
      <TaskIcon><StoreLogo /></TaskIcon>
      <TaskIcon><DropboxTile><FaDropbox size={13} color="#fff" /></DropboxTile></TaskIcon>
      <TaskIcon $bar={13} $barColor="#e3a5b2"><TaskHighlight><ChromeLogo /></TaskHighlight></TaskIcon>
      <TaskIcon><FaWhatsapp size={22} color="#35c463" /></TaskIcon>
      <TaskIcon $bar={5}><OfficeLogo $shades="#2fa467, #157a43" $tag="#10693a"><b>X</b></OfficeLogo></TaskIcon>
      <TaskIcon $bar={5}><OfficeLogo $shades="#3e97e5, #1c52ad" $tag="#1a52ae"><b>W</b></OfficeLogo></TaskIcon>
      <Tray>
        <ChevronUp size={12} strokeWidth={2.6} />
        <CloudIcon />
        <SyncIcon />
        <Mic size={14} strokeWidth={1.8} color="#c896a5" />
        <Wifi size={14} strokeWidth={2.2} />
        <SpeakerIcon />
        <BatteryIcon />
        <Clock>19.29<br />19/12/2023</Clock>
        <TrayEnd><TrayBell /></TrayEnd>
      </Tray>
    </Taskbar>
  </Screen>
);

export default App;
